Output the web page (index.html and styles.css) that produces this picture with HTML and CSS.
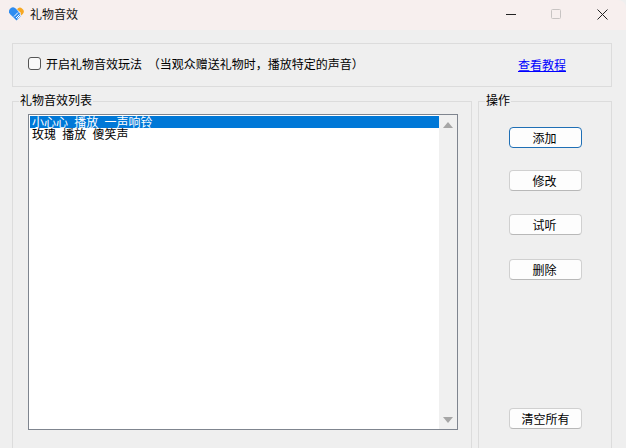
FILE: index.html
```html
<!DOCTYPE html>
<html lang="zh-CN">
<head>
<meta charset="utf-8">
<title>礼物音效</title>
<link rel="stylesheet" href="styles.css">
</head>
<body>
<div class="window">
  <header class="titlebar">
    <svg class="app-icon" width="15" height="14" viewBox="0 0 15 14">
      <path d="M7.5 13.5 L1.2 7.2 A3.9 3.9 0 0 1 7 1.8 L11 6.5 L11.5 9.5 Z" fill="#2f8cf0"/>
      <path d="M8 2.2 A3.7 3.7 0 0 1 13.8 7 L12.2 8.6 L11.6 5.6 Z" fill="#f7a823"/>
      <path d="M5 9.5 L9 5.5 M7 11 L10.5 7.5 M8.5 11.5 L11.5 8.5" stroke="#fff" stroke-width="1" fill="none"/>
    </svg>
    <span class="title">礼物音效</span>
    <div class="controls">
      <svg class="ctl" width="11" height="11" viewBox="0 0 11 11"><path d="M1 5.5H11" stroke="#222" fill="none"/></svg>
      <svg class="ctl" width="11" height="11" viewBox="0 0 11 11"><rect x=".5" y=".5" width="9" height="9" rx="1" stroke="#c8c4c3" fill="none"/></svg>
      <svg class="ctl" width="11" height="11" viewBox="0 0 11 11"><path d="M.5 .5L10.5 10.5M10.5 .5L.5 10.5" stroke="#222" fill="none"/></svg>
    </div>
  </header>
  <main class="content">
    <section class="option-box">
      <label class="check"><span class="checkbox"></span><span class="check-text">开启礼物音效玩法 （当观众赠送礼物时，播放特定的声音）</span></label>
      <a class="tutorial" href="#">查看教程</a>
    </section>
    <div class="columns">
      <section class="group list-group">
        <h2 class="legend">礼物音效列表</h2>
        <div class="listbox">
          <ul class="items">
            <li class="item selected">小心心 播放 一声响铃</li>
            <li class="item">玫瑰 播放 傻笑声</li>
          </ul>
          <div class="scrollbar">
            <span class="arrow up"></span>
            <span class="arrow down"></span>
          </div>
        </div>
      </section>
      <section class="group action-group">
        <h2 class="legend">操作</h2>
        <button class="btn primary">添加</button>
        <button class="btn">修改</button>
        <button class="btn wide-gap">试听</button>
        <button class="btn">删除</button>
        <button class="btn clear">清空所有</button>
      </section>
    </div>
  </main>
</div>
</body>
</html>
```
FILE: styles.css
```css
* { box-sizing: border-box; margin: 0; padding: 0; }
html, body { height: 100%; overflow: hidden; background: #efefef; }
body {
  font-family: "Noto Sans CJK SC", "Liberation Sans", sans-serif;
  font-size: 12px;
  line-height: 13px;
  color: #000;
}
.window { width: 626px; height: 448px; overflow: hidden; display: flex; flex-direction: column; }
.titlebar {
  height: 30px;
  flex: none;
  background: #f7efee;
  display: flex;
  align-items: center;
  padding: 0 0 2px 9px;
  border-top-right-radius: 8px;
}
.app-icon { margin-right: 6px; }
.title { color: #111; margin-bottom: 2px; }
.controls { margin-left: auto; display: flex; gap: 35px; padding-right: 18px; }
.ctl { display: block; }
.content { flex: 1; padding: 13px 14px 0 12px; display: flex; flex-direction: column; min-height: 0; }
.option-box {
  height: 44px;
  flex: none;
  border: 1px solid #dcdcdc;
  display: flex;
  align-items: center;
  justify-content: space-between;
  padding: 0 45px 0 15px;
}
.check { display: flex; align-items: center; gap: 5px; margin-top: -3px; }
.check-text { word-spacing: 3px; }
.checkbox {
  width: 13px; height: 13px;
  border: 1px solid #555;
  border-radius: 3px;
  background: #f8f8f8;
}
.tutorial { color: #0000ff; text-decoration: underline; margin-top: -2px; }
.columns { flex: 1; display: flex; gap: 6px; margin-top: 14px; min-height: 0; }
.group { position: relative; border: 1px solid #dcdcdc; border-bottom: 0; height: 360px; flex: none; }
.legend {
  position: absolute;
  top: -9px;
  left: 6px;
  padding: 0 1px;
  background: #efefef;
  font-size: 12px;
  font-weight: 400;
  line-height: 13px;
}
.list-group { width: 460px; padding: 12px 13px 0 15px; }
.listbox {
  height: 316px;
  border: 1px solid #7f858f;
  background: #fff;
  display: flex;
  padding: 1px;
}
.items { flex: 1; list-style: none; }
.item { height: 12px; line-height: 12px; padding-left: 2px; white-space: nowrap; word-spacing: 3.5px; }
.selected { background: #0078d7; color: #fff; }
.scrollbar {
  width: 18px;
  margin: -1px -1px -1px 0;
  background: #f0f0f0;
  display: flex;
  flex-direction: column;
  justify-content: space-between;
  align-items: center;
  padding: 7px 0 6px;
}
.arrow { width: 0; height: 0; border-left: 5px solid transparent; border-right: 5px solid transparent; }
.up { border-bottom: 6px solid #a6a6a6; }
.down { border-top: 6px solid #a6a6a6; }
.action-group {
  width: 134px;
  display: flex;
  flex-direction: column;
  align-items: flex-start;
  padding: 25px 0 0 30px;
}
.btn {
  width: 73px;
  height: 21px;
  margin-bottom: 23px;
  padding-right: 2px;
  flex: none;
  background: #fdfdfd;
  border: 1px solid #d0d0d0;
  border-bottom-color: #b8b8b8;
  border-radius: 4px;
  font: inherit;
  color: #000;
}
.primary { margin-bottom: 22px; border: 1px solid #1f6fb5; }
.wide-gap { margin-bottom: 24px; }
.clear { margin-top: 105px; padding-right: 0; }
```
